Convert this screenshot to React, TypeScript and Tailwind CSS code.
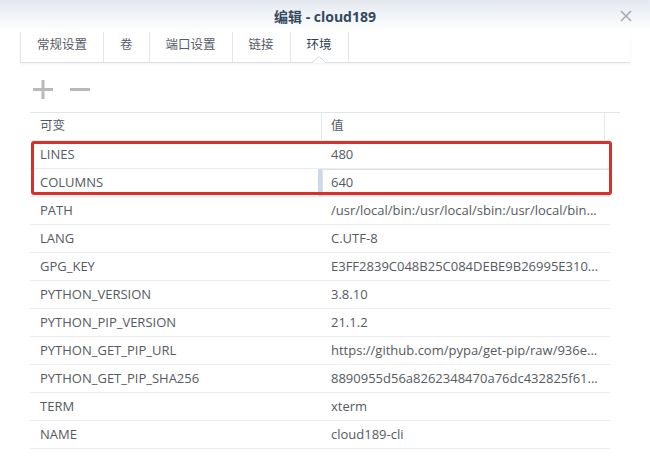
const tabs = ["常规设置", "卷", "端口设置", "链接", "环境"]

// values are cut where the grid cuts them
const rows: [string, string][] = [
  ["LINES", "480"],
  ["COLUMNS", "640"],
  ["PATH", "/usr/local/bin:/usr/local/sbin:/usr/local/bin..."],
  ["LANG", "C.UTF-8"],
  ["GPG_KEY", "E3FF2839C048B25C084DEBE9B26995E310..."],
  ["PYTHON_VERSION", "3.8.10"],
  ["PYTHON_PIP_VERSION", "21.1.2"],
  ["PYTHON_GET_PIP_URL", "https://github.com/pypa/get-pip/raw/936e..."],
  ["PYTHON_GET_PIP_SHA256", "8890955d56a8262348470a76dc432825f61..."],
  ["TERM", "xterm"],
  ["NAME", "cloud189-cli"],
]

function Tabs() {
  return (
    <div className="mx-[20px] flex h-[31px] border-b border-[#dde1e5] shadow-[0_1px_2px_rgba(0,0,0,0.06)]">
      {tabs.map((t, i) => {
        const active = i === tabs.length - 1
        return (
          <div
            key={t}
            className={`relative flex items-center px-4 pb-[4px] text-[12.5px] border-r border-[#e3e6e9] ${i === 0 ? "border-l" : ""} ${active ? "text-[#2c3e50]" : "text-[#545c66]"}`}
          >
            {t}
            {active && (
              <svg className="absolute -bottom-[1px] left-1/2 -translate-x-1/2" width="14" height="7" viewBox="0 0 14 7">
                <path d="M0 7 L7 0.5 L14 7" fill="#fff" stroke="#d5d9dd" strokeWidth="1" />
              </svg>
            )}
          </div>
        )
      })}
    </div>
  )
}

function Toolbar() {
  return (
    <div className="flex h-[49px] items-start gap-[17px] pl-[33px] pt-[17px]">
      <svg width="20" height="19" viewBox="0 0 20 19">
        <rect x="0" y="8" width="20" height="3" fill="#b9b9b9" />
        <rect x="8.5" y="0" width="3" height="19" fill="#b9b9b9" />
      </svg>
      <svg width="20" height="19" viewBox="0 0 20 19">
        <rect x="0" y="8" width="20" height="3" fill="#b9b9b9" />
      </svg>
    </div>
  )
}

function Table() {
  return (
    <div className="relative ml-[30px] w-[590px]">
      <div className="flex h-[28px] border-t border-[#e2e5e8] text-[12.5px] text-[#4f5a66]">
        <div className="flex w-[291px] items-center pl-[10px]">可变</div>
        <div className="flex w-[283px] items-center border-l border-[#e6e8eb] pl-[9px]">值</div>
        <div className="flex-1 border-l border-[#e6e8eb]" />
      </div>
      {rows.map(([k, v], i) => (
        <div key={k} className="flex h-[28px] w-[580px] border-t border-[#ebedef] text-[13px] text-[#545a60]">
          <div className="flex w-[288px] items-center pl-[10px]">{k}</div>
          {i === 1 ? (
            <div className="flex flex-1 items-center border-l-[4px] border-[#cdd9e6] pl-[9px] pr-2 shadow-[inset_0_0_0_1px_#dde3ea]">
              {v}
            </div>
          ) : (
            <div className="flex flex-1 items-center whitespace-nowrap pl-[13px]">{v}</div>
          )}
        </div>
      ))}
      <div className="w-[580px] border-t border-[#ebedef]" />
      <div className="absolute left-[1px] top-[29px] h-[54px] w-[581px] rounded-[3px] border-[3px] border-[#d8302a]" />
    </div>
  )
}

export default function App() {
  return (
    <div className="relative h-[464px] w-[650px] overflow-hidden bg-white font-['Open_Sans','Noto_Sans_CJK_SC',sans-serif]">
      <div className="relative flex h-[32px] items-center justify-center bg-gradient-to-b from-[#e4e9ef] to-white">
        <span className="text-[14px] font-bold text-[#34495e]">编辑 - cloud189</span>
        <svg className="absolute right-[18px] top-[10px]" width="12" height="12" viewBox="0 0 12 12">
          <path d="M1 1 L11 11 M11 1 L1 11" stroke="#a6a9ad" strokeWidth="1.5" />
        </svg>
      </div>
      <Tabs />
      <Toolbar />
      <Table />
    </div>
  )
}
